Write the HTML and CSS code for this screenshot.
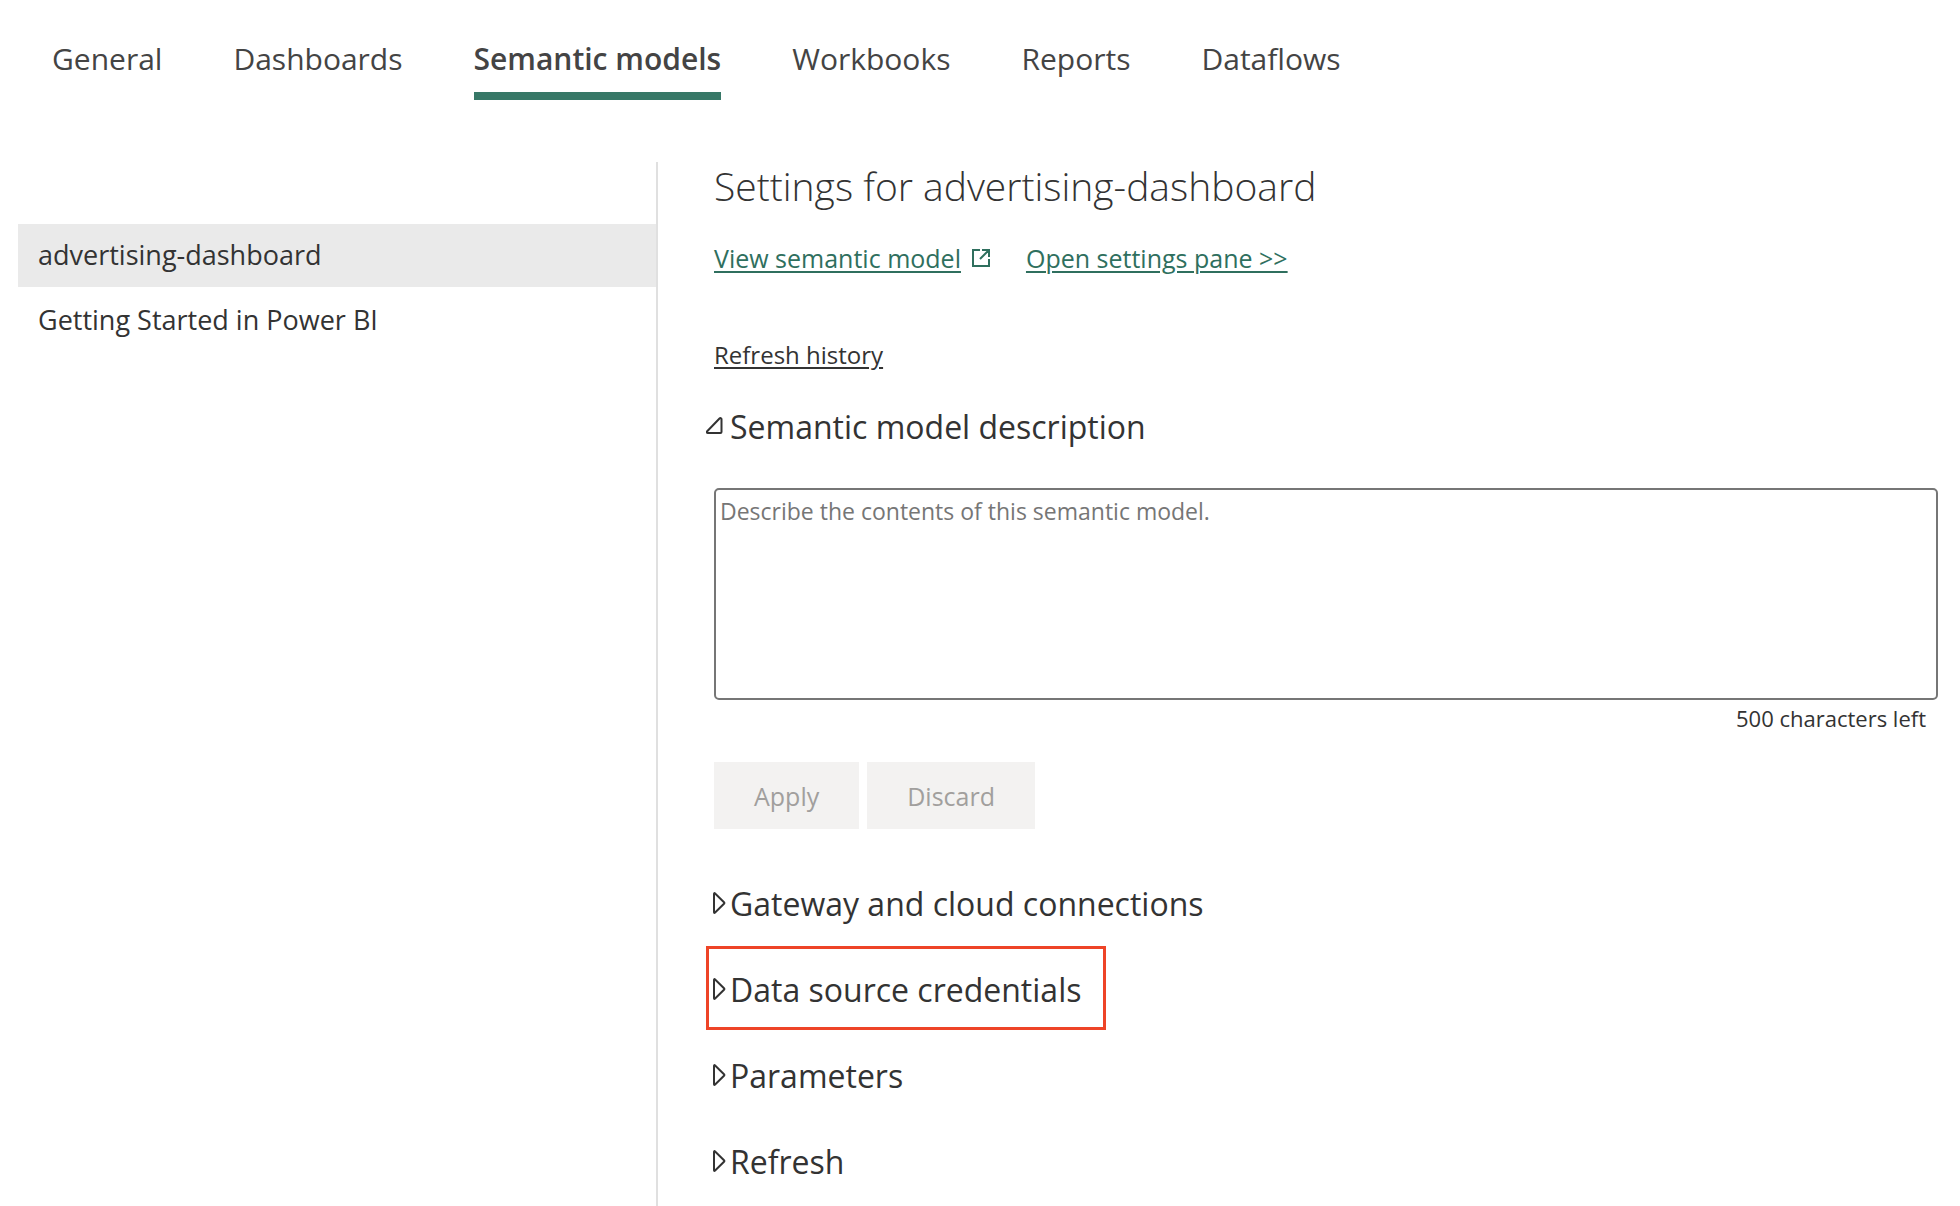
FILE: index.html
```
<!DOCTYPE html>
<html lang="en">
<head>
  <meta charset="UTF-8">
  <title>Settings - Semantic models</title>
  <link rel="stylesheet" href="styles.css">
</head>
<body>
  <nav class="tabs">
    <a href="#general">General</a>
    <a href="#dashboards">Dashboards</a>
    <a href="#models" class="active" aria-current="page">Semantic models</a>
    <a href="#workbooks">Workbooks</a>
    <a href="#reports">Reports</a>
    <a href="#dataflows">Dataflows</a>
  </nav>

  <div class="container">
    <aside class="model-list">
      <a href="#advertising-dashboard" class="selected">advertising-dashboard</a>
      <a href="#getting-started">Getting Started in Power BI</a>
    </aside>

    <main class="settings">
      <h1>Settings for advertising-dashboard</h1>

      <div class="links">
        <a href="#view">View semantic model</a>
        <svg class="external" viewBox="0 0 18 18" aria-hidden="true">
          <path d="M8 1H1v16h16v-7M17 8V1h-7M17 1L8 10" />
        </svg>
        <a href="#pane">Open settings pane &gt;&gt;</a>
      </div>

      <a href="#history" class="history">Refresh history</a>

      <!-- Description -->
      <h2 class="description-title">
        <button type="button" class="toggle" id="descriptionToggle" aria-expanded="true">
          <svg class="arrow open" viewBox="0 0 20 24" aria-hidden="true">
            <path d="M13.5 4.5c.8-.8 2-.4 2 .6V18q0 1-1 1H1.800c-1 0-1.300-1-.6-1.700z" />
          </svg>
          Semantic model description
        </button>
      </h2>
      <textarea id="description" aria-labelledby="descriptionToggle" placeholder="Describe the contents of this semantic model."></textarea>
      <div class="counter">500 characters left</div>
      <div class="actions">
        <button type="button" disabled>Apply</button>
        <button type="button" disabled>Discard</button>
      </div>

      <!-- Collapsed sections -->
      <div class="sections">
        <h2>
          <button type="button" class="toggle" aria-expanded="false">
            <svg class="arrow" viewBox="0 0 20 24" aria-hidden="true">
              <path d="M5 3q0-1.500 1.100-.5l8.900 8.700q.8.800 0 1.600l-8.900 8.700q-1.100 1-1.100-.5z" />
            </svg>
            Gateway and cloud connections
          </button>
        </h2>
        <h2>
          <button type="button" class="toggle highlight" aria-expanded="false">
            <svg class="arrow" viewBox="0 0 20 24" aria-hidden="true">
              <path d="M5 3q0-1.500 1.100-.5l8.900 8.700q.8.800 0 1.600l-8.900 8.700q-1.100 1-1.100-.5z" />
            </svg>
            Data source credentials
          </button>
        </h2>
        <h2>
          <button type="button" class="toggle" aria-expanded="false">
            <svg class="arrow" viewBox="0 0 20 24" aria-hidden="true">
              <path d="M5 3q0-1.500 1.100-.5l8.900 8.700q.8.800 0 1.600l-8.900 8.700q-1.100 1-1.100-.5z" />
            </svg>
            Parameters
          </button>
        </h2>
        <h2>
          <button type="button" class="toggle" aria-expanded="false">
            <svg class="arrow" viewBox="0 0 20 24" aria-hidden="true">
              <path d="M5 3q0-1.500 1.100-.5l8.900 8.700q.8.800 0 1.600l-8.900 8.700q-1.100 1-1.100-.5z" />
            </svg>
            Refresh
          </button>
        </h2>
      </div>
    </main>
  </div>
</body>
</html>
```
FILE: styles.css
```
* {
  box-sizing: border-box;
}
body {
  margin: 0;
  min-height: 100vh;
  display: flex;
  flex-direction: column;
  background: #fff;
  color: #333;
  font-family: "Segoe UI", "Open Sans", "Noto Sans", sans-serif;
  font-size: 25px;
}
h1,
h2 {
  margin: 0;
}
button,
textarea {
  font-family: inherit;
}
.tabs {
  display: flex;
  gap: 71px;
  padding: 39px 52px 0;
}
.tabs a {
  padding-bottom: 13px;
  border-bottom: 8px solid transparent;
  font-size: 30px;
  line-height: 40px;
  color: #444;
  text-decoration: none;
}
.tabs a.active {
  font-weight: 600;
  border-bottom-color: #377867;
}
.container {
  flex: 1;
  display: flex;
  margin-top: 62px;
}
.model-list {
  width: 640px;
  flex-shrink: 0;
  margin-left: 18px;
  padding-top: 62px;
  display: flex;
  flex-direction: column;
  gap: 2px;
  border-right: 2px solid #e0e0e0;
}
.model-list a {
  padding: 13px 20px 14px;
  font-size: 27px;
  line-height: 36px;
  color: #333;
  text-decoration: none;
}
.model-list a.selected {
  background: #eaeaea;
}
.settings {
  flex: 1;
  padding: 0 22px 0 56px;
}
h1 {
  font-size: 39px;
  line-height: 48px;
  font-weight: 300;
}
.links {
  display: flex;
  align-items: center;
  margin-top: 30px;
  line-height: 36px;
}
.links a {
  color: #2f6f5e;
}
.external {
  width: 18px;
  height: 18px;
  margin: 0 36px 0 11px;
  fill: none;
  stroke: #2f6f5e;
  stroke-width: 2;
}
.links a,
.history {
  text-decoration-thickness: 2px;
  text-underline-offset: 3px;
}
.history {
  display: block;
  width: fit-content;
  margin-top: 61px;
  font-size: 24px;
  line-height: 36px;
  color: #333;
}
.description-title {
  margin: 10px 0 21px;
}
.toggle {
  display: flex;
  align-items: center;
  height: 84px;
  margin-left: -8px;
  padding: 2px 22px 0 0;
  border: 3px solid transparent;
  background: none;
  font-size: 32px;
  color: #333;
  cursor: pointer;
}
.toggle.highlight {
  border-color: #ee4427;
}
.arrow {
  width: 20px;
  height: 24px;
  margin-right: 1px;
  fill: none;
  stroke: #333;
  stroke-width: 2;
}
.arrow.open {
  margin: 0 4px 0 -3px;
}
textarea {
  display: block;
  width: 100%;
  height: 212px;
  padding: 4px;
  border: 2px solid #767676;
  border-radius: 5px;
  font-size: 23px;
  line-height: 34px;
  color: #333;
  resize: none;
}
textarea::placeholder {
  color: #767676;
}
.counter {
  padding-right: 12px;
  font-size: 22px;
  line-height: 36px;
  text-align: right;
}
.actions {
  display: flex;
  gap: 8px;
  margin-top: 26px;
}
.actions button {
  height: 67px;
  padding: 0 40px;
  border: none;
  background: #f3f2f1;
  font-size: 25px;
  color: #a19f9d;
}
.sections {
  display: flex;
  flex-direction: column;
  gap: 2px;
  margin-top: 31px;
}
```
